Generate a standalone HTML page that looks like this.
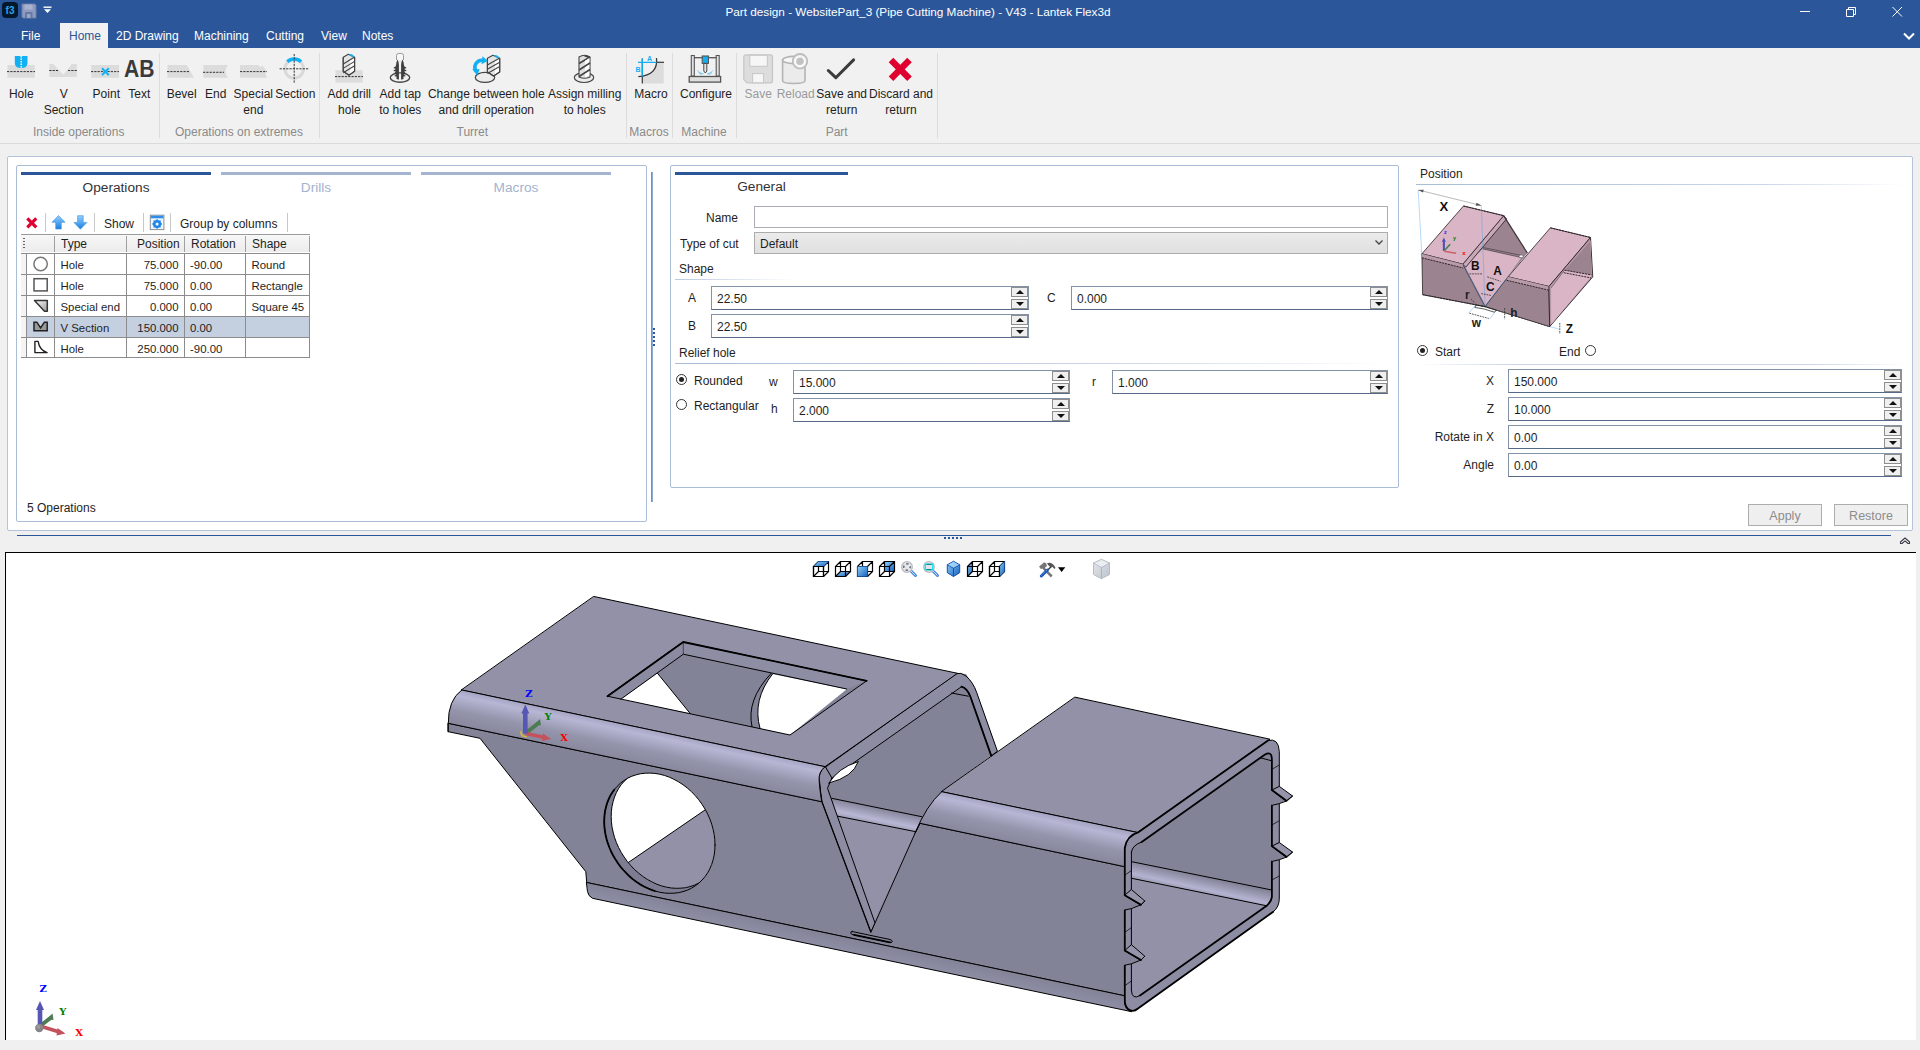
<!DOCTYPE html>
<html lang="en">
<head>
<meta charset="utf-8">
<title>Part design - WebsitePart_3 (Pipe Cutting Machine) - V43 - Lantek Flex3d</title>
<style>
*{box-sizing:border-box;margin:0;padding:0}
html,body{width:1920px;height:1050px;overflow:hidden;background:#f0f0f0;font-family:"Liberation Sans",sans-serif;font-size:12px;color:#1e1e1e}
.abs,.abs *{position:absolute}
#app{position:relative;width:1920px;height:1050px;overflow:hidden}
.t{position:absolute;white-space:nowrap;line-height:16px;height:16px}
.c{text-align:center}
.r{text-align:right}
/* title */
#title{position:absolute;left:0;top:0;width:1920px;height:48px;background:#2b579a}
#title .t{color:#fff}
#hometab{position:absolute;left:60px;top:23px;width:48px;height:25px;background:#f1f1f1}
#ribbon{position:absolute;left:0;top:48px;width:1920px;height:95px;background:#f1f1f1}
#ribline{position:absolute;left:0;top:143px;width:1920px;height:1px;background:#dadbdc}
.rl{position:absolute;white-space:nowrap;line-height:16px;font-size:12px;color:#1e1e1e;text-align:center;transform:translateX(-50%)}
.rg{position:absolute;white-space:nowrap;line-height:16px;font-size:12px;color:#8a8a8a;text-align:center;transform:translateX(-50%);top:76px}
.rsep{position:absolute;top:5px;width:1px;height:85px;background:#dcdcdc}
.dis{color:#9a9a9a}
/* panels */
.panel{position:absolute;background:#fff;border:1px solid #abbcd6;border-radius:2px}
.tabline{position:absolute;height:3px;top:172px}
.inp{position:absolute;background:#fff;border:1px solid #8492a8;border-bottom-color:#566a88;height:24px}
.inp span{position:absolute;left:5px;top:4px;line-height:16px;font-size:12px;white-space:nowrap}
.spin{position:absolute;width:17px;height:10px;border:1px solid #8e8e8e;background:#efefef}
.spin:after{content:"";position:absolute;left:3.5px;top:2px;border-left:4px solid transparent;border-right:4px solid transparent}
.spin.u:after{border-bottom:4px solid #111}
.spin.d:after{border-top:4px solid #111}
.radio{position:absolute;width:11px;height:11px;border:1px solid #333;border-radius:50%;background:#fff}
.radio.on:after{content:"";position:absolute;left:2px;top:2px;width:5px;height:5px;border-radius:50%;background:#222}
.hl{position:absolute;height:1px}
.btn{position:absolute;border:1px solid #adadad;background:#efefef;color:#8c8c8c;font-size:12.5px;text-align:center;line-height:22px;height:22px}
/* grid */
.gh{position:absolute;top:236px;height:16px;background:#f0f0f0;border-right:1px solid #a0a0a0;font-size:12px;line-height:16px;padding-left:6px;white-space:nowrap;overflow:hidden}
.gc{position:absolute;height:21px;border-right:1px solid #8c8c8c;border-bottom:1px solid #8c8c8c;font-size:11.4px;line-height:22px;white-space:nowrap;overflow:hidden;background:#fff}
.gc.sel{background:#c4cfe0}
#vp{position:absolute;left:5px;top:552px;width:1911px;height:488px;background:#fff;border-left:1px solid #000;border-top:1px solid #000}
</style>
</head>
<body>
<div id="app">
<!--TITLE-->
<div id="title">
  <!-- app icon -->
  <svg style="position:absolute;left:2px;top:2px" width="16" height="16" viewBox="0 0 16 16"><rect x="0" y="0" width="16" height="16" rx="4" fill="#04182b"/><text x="8" y="12" font-family="Liberation Sans, sans-serif" font-size="10" font-weight="bold" fill="#2aa3ee" text-anchor="middle">f3</text></svg>
  <!-- save icon (qat) -->
  <svg style="position:absolute;left:21px;top:3px" width="16" height="16" viewBox="0 0 16 16"><path d="M1 1h13l1 1v13H2L1 14z" fill="#8f9cc0" stroke="#6c7ca3" stroke-width="1"/><rect x="3.5" y="1.5" width="8" height="5" fill="#a9b3d1"/><rect x="4" y="9" width="7.5" height="6" fill="#6678a5"/><rect x="6" y="11" width="3.5" height="4" fill="#9aa6c8"/></svg>
  <svg style="position:absolute;left:43px;top:6px" width="9" height="8" viewBox="0 0 9 8"><rect x="0.5" y="0.5" width="8" height="1.4" fill="#fff"/><path d="M1 3.3h7L4.5 7z" fill="#fff"/></svg>
  <div class="t c" style="left:618px;width:600px;top:3.6px;font-size:11.75px">Part design - WebsitePart_3 (Pipe Cutting Machine) - V43 - Lantek Flex3d</div>
  <!-- window controls -->
  <svg style="position:absolute;left:1796px;top:3px" width="120" height="18" viewBox="0 0 120 18"><g stroke="#fff" stroke-width="1" fill="none"><path d="M4 8.5h10"/><path d="M50.5 6.5h7v7h-7z"/><path d="M52.500 6.500v-2h7v7h-2"/><path d="M96.500 4l9.500 9.500M106 4l-9.500 9.500"/></g></svg>
  <svg style="position:absolute;left:1902px;top:31px" width="14" height="10" viewBox="0 0 14 10"><path d="M2 2.500l5 5 5-5" stroke="#fff" stroke-width="2" fill="none"/></svg>
  <div id="hometab"></div>
  <div class="t" style="left:21px;top:28px">File</div>
  <div class="t" style="left:69px;top:28px;color:#2b579a">Home</div>
  <div class="t" style="left:116px;top:28px">2D Drawing</div>
  <div class="t" style="left:194px;top:28px">Machining</div>
  <div class="t" style="left:266px;top:28px">Cutting</div>
  <div class="t" style="left:321px;top:28px">View</div>
  <div class="t" style="left:362px;top:28px">Notes</div>
</div>
<!--RIBBON-->
<div id="ribbon">
<svg style="position:absolute;left:0;top:0" width="960" height="95" viewBox="0 48 960 95">
<!-- Hole -->
<rect x="7.500" y="65" width="27.300" height="12.800" fill="#dcdcdc"/><path d="M7 71.600h28" stroke="#333" stroke-width="1" stroke-dasharray="2.2 1.1"/>
<path d="M14.800 56h12.700v7q0 5-6.350 5q-6.350 0-6.350-5z" fill="#12b0f3"/><path d="M21.200 56v12" stroke="#fff" stroke-width="1.400" stroke-dasharray="1.400 1.100"/>
<!-- V section -->
<path d="M49.300 64h4l10 10.700 8.400-10.700h5.100v13h-27.500z" fill="#dcdcdc"/><path d="M49.300 70.500h9.800M68 70.500h9" stroke="#333" stroke-width="1" stroke-dasharray="2.2 1.1"/>
<!-- Point -->
<rect x="91.250" y="65" width="27.750" height="12.800" fill="#dcdcdc"/><path d="M91 71.600h28" stroke="#333" stroke-width="1" stroke-dasharray="2.2 1.1"/>
<path d="M102 68.300l6.800 6.800M108.800 68.300l-6.800 6.800" stroke="#12b0f3" stroke-width="2"/>
<!-- Text AB -->
<text x="139.200" y="77.200" font-family="Liberation Sans, sans-serif" font-weight="bold" font-size="23.500" fill="#3a3a3c" text-anchor="middle" textLength="30.500" lengthAdjust="spacingAndGlyphs">AB</text>
<!-- Bevel -->
<path d="M167.500 65h19.200l7.300 12.800h-26.500z" fill="#dcdcdc"/><path d="M167 71.600h23" stroke="#333" stroke-width="1" stroke-dasharray="2.2 1.1"/>
<!-- End -->
<path d="M203.300 65h24.700q-5 6.400 0 12.800h-24.700z" fill="#dcdcdc"/><path d="M203 72.300h21" stroke="#333" stroke-width="1" stroke-dasharray="2.2 1.1"/>
<!-- Special end -->
<path d="M240 65h18.500l2 2.300 2-1.800 4.500 6-2 1.500 2.200 4.800h-27.200z" fill="#dcdcdc"/><path d="M240 71.600h27" stroke="#333" stroke-width="1" stroke-dasharray="2.2 1.1"/>
<!-- Section -->
<circle cx="294.200" cy="68.800" r="9.300" fill="none" stroke="#d9d9d9" stroke-width="3"/>
<path d="M287.400 61.700a9.800 9.800 0 0 1 13.600 0" fill="none" stroke="#12b0f3" stroke-width="3.600"/>
<path d="M294.200 54v29.500M279.600 68.800h29.200" stroke="#333" stroke-width="1" stroke-dasharray="2.2 1.1"/>
<!-- Add drill hole -->
<rect x="335.400" y="70.300" width="27.300" height="12.300" fill="#dcdcdc"/><path d="M335 76.600h28" stroke="#333" stroke-width="1" stroke-dasharray="2.2 1.1"/>
<path d="M343.2 57.2 L348.33 54.2 L354.59999999999997 57.2 V71.2 L348.9 75.2 L343.2 71.2Z" fill="#e4e4e4" stroke="#444" stroke-width="1.1" stroke-linejoin="round"/><path d="M350.268 60.2L353.99999999999994 58.7V70.2L350.268 73.7Z" fill="#fff"/><path d="M343.2 64.03333333333333 L354.59999999999997 57.03333333333334" stroke="#444" stroke-width="1.1" fill="none"/><path d="M343.2 68.36666666666667 L354.59999999999997 61.366666666666674" stroke="#444" stroke-width="1.1" fill="none"/><path d="M343.2 72.7 L354.59999999999997 65.7" stroke="#444" stroke-width="1.1" fill="none"/><path d="M343.2 57.2 V71.2 L348.9 75.2 L354.59999999999997 71.2 V57.2" fill="none" stroke="#444" stroke-width="1.1"/><path d="M348.9 54.5 Q352.32 53.0 354.59999999999997 57.0 L351.75 56.800000000000004Z" fill="#12b0f3"/>
<!-- Add tap -->
<ellipse cx="400" cy="77.600" rx="9.700" ry="4.700" fill="#f1f1f1" stroke="#444" stroke-width="1.400"/>
<path d="M396.500 60v-4.500q0-2 2-2h3q2 0 2 2v4.500" fill="#f7f7f7" stroke="#9a9a9a" stroke-width="1"/>
<path d="M397.700 59.500q.8 1.500 1.200 5.500v14.700q-1.600-.2-2.600-.9l.4-2-2.600-.7 2.200-1.600-2.800-1 2.500-1.700-2.800-1 2.600-1.800-2.400-.9 2.500-2 .600-4zM402.300 59.500q-.8 1.500-1.200 5.500v14.700q1.600-.2 2.600-.9l-.4-2 2.600-.7-2.200-1.600 2.800-1-2.500-1.700 2.800-1-2.600-1.800 2.400-.9-2.500-2-.600-4z" fill="#3f3f41"/>
<!-- Change between -->
<ellipse cx="485" cy="77.400" rx="9.700" ry="5" fill="#ececec" stroke="#444" stroke-width="1.200"/>
<path d="M487.4 58.2 L492.935 55.2 L499.7 58.2 V72.0 L493.54999999999995 76.0 L487.4 72.0Z" fill="#e4e4e4" stroke="#444" stroke-width="1.1" stroke-linejoin="round"/><path d="M495.02599999999995 61.2L499.09999999999997 59.7V71.0L495.02599999999995 74.5Z" fill="#fff"/><path d="M487.4 64.96666666666667 L499.7 57.96666666666667" stroke="#444" stroke-width="1.1" fill="none"/><path d="M487.4 69.23333333333333 L499.7 62.233333333333334" stroke="#444" stroke-width="1.1" fill="none"/><path d="M487.4 73.5 L499.7 66.5" stroke="#444" stroke-width="1.1" fill="none"/><path d="M487.4 58.2 V72.0 L493.54999999999995 76.0 L499.7 72.0 V58.2" fill="none" stroke="#444" stroke-width="1.1"/><path d="M493.54999999999995 55.5 Q497.23999999999995 54.0 499.7 58.0 L496.625 57.800000000000004Z" fill="#12b0f3"/>
<path d="M484.500 60.800a7 7 0 0 0-8.300 10.500" fill="none" stroke="#12b0f3" stroke-width="3.600"/>
<path d="M482.600 56.300l5.200 4.700-6.400 3.300z" fill="#12b0f3"/><path d="M472.300 69l7.400 .2-2.600 6.400z" fill="#12b0f3"/>
<!-- Assign milling -->
<ellipse cx="584" cy="77.600" rx="9.700" ry="4.900" fill="#ececec" stroke="#444" stroke-width="1.200"/>
<path d="M579 57q5.500-3.500 11 0v20q-5.500 2.500-11 0z" fill="#e0e0e0" stroke="#444" stroke-width="1.100"/>
<path d="M579 63.500l11-6.500M579 70l11-7M579 76.500l11-7M584.500 55.700l5 1.500" stroke="#444" stroke-width="1.600" fill="none"/>
<path d="M585 60.700l4.400-2.600v4l-4.400 2.700zM585 67.300l4.400-2.700v4l-4.400 2.700zM585 74l4.400-2.800v4l-4.400 2.400z" fill="#fff"/>
<!-- Macro -->
<path d="M656.700 62.300h7v21.200h-21.400v-6.800q14.400-.7 14.400-14.400z" fill="#dcdcdc"/>
<path d="M642.300 58.400v25" stroke="#3a3a3c" stroke-width="1.200"/><path d="M656 62.300h8" stroke="#3a3a3c" stroke-width="1.200"/>
<path d="M656.500 58q2 17-18.200 18.700" fill="none" stroke="#3a3a3c" stroke-width="1.300"/>
<path d="M638 62.300h18.500M642.300 58.400v18" stroke="#12b0f3" stroke-width="1.200"/>
<text x="649.600" y="60.500" font-family="Liberation Sans, sans-serif" font-weight="bold" font-size="7" fill="#12b0f3" text-anchor="middle">A</text>
<text x="638" y="72.200" font-family="Liberation Sans, sans-serif" font-weight="bold" font-size="7" fill="#12b0f3" text-anchor="middle">B</text>
<!-- Configure -->
<path d="M691.300 55.500h3v20.500h-3zM716.200 55.500h3v20.500h-3z" fill="#e2e2e2" stroke="#555" stroke-width="1.100"/>
<path d="M694 57.700h22.500" stroke="#555" stroke-width="1.300"/>
<rect x="689.200" y="76.500" width="31.400" height="5.600" fill="#dedede" stroke="#555" stroke-width="1.300"/>
<rect x="702.200" y="56" width="6.200" height="7.400" fill="#12b0f3" stroke="#555" stroke-width="1.100"/>
<path d="M703.800 63.400h3v7.600l-1.500 2-1.500-2z" fill="#e8e8e8" stroke="#444" stroke-width="1"/>
<path d="M697.500 70.300q2 3.500 6 3.500M698.500 72.500q1.500 1.800 3.500 1.900M713 70.300q-2 3.500-6 3.500M712 72.500q-1.500 1.800-3.500 1.900" stroke="#12b0f3" stroke-width=".7" fill="none" opacity=".8"/>
<!-- Save disabled -->
<path d="M746 54.800h24.500q2 0 2 2v24q0 2-2 2h-23.500l-3.200-3.200v-22.800q0-2 2.200-2z" fill="#dddddd" stroke="#c6c6c6" stroke-width="1.200"/>
<rect x="749.800" y="55.300" width="17.500" height="11" fill="#f6f6f6" stroke="#c6c6c6" stroke-width="1"/>
<rect x="752.600" y="73.600" width="11" height="9.200" fill="#f6f6f6" stroke="#c6c6c6" stroke-width="1"/>
<!-- Reload disabled -->
<path d="M782.600 60v20.500q0 3 11.200 3t11.200-3v-20.500" fill="#ebebeb" stroke="#b4b4b4" stroke-width="1.600"/>
<ellipse cx="793.800" cy="60" rx="11.200" ry="3.600" fill="#f7f7f7" stroke="#b4b4b4" stroke-width="1.600"/>
<circle cx="800" cy="61.300" r="7.300" fill="#f3f3f3" stroke="#bcbcbc" stroke-width="1.800"/>
<circle cx="800" cy="61.300" r="3.800" fill="#c2c2c2"/><circle cx="800" cy="61.300" r="4.600" fill="none" stroke="#fff" stroke-width="1" stroke-dasharray="9 3"/>
<!-- Save and return -->
<path d="M828.300 70.500l7.500 7.200 17.800-17.800" fill="none" stroke="#3b3b3d" stroke-width="3" stroke-linecap="round" stroke-linejoin="round"/>
<!-- Discard -->
<path d="M891 60l18.500 18.700M909.500 60l-18.500 18.700" stroke="#e0002f" stroke-width="6.400"/>
</svg>
<div class="rl" style="left:21.3px;top:38px">Hole</div><div class="rl" style="left:63.7px;top:38px">V</div><div class="rl" style="left:63.7px;top:54px">Section</div><div class="rl" style="left:106.3px;top:38px">Point</div><div class="rl" style="left:139.3px;top:38px">Text</div><div class="rl" style="left:181.7px;top:38px">Bevel</div><div class="rl" style="left:215.7px;top:38px">End</div><div class="rl" style="left:253.3px;top:38px">Special</div><div class="rl" style="left:253.3px;top:54px">end</div><div class="rl" style="left:295.3px;top:38px">Section</div><div class="rl" style="left:349.3px;top:38px">Add drill</div><div class="rl" style="left:349.3px;top:54px">hole</div><div class="rl" style="left:400.3px;top:38px">Add tap</div><div class="rl" style="left:400.3px;top:54px">to holes</div><div class="rl" style="left:486.3px;top:38px">Change between hole</div><div class="rl" style="left:486.3px;top:54px">and drill operation</div><div class="rl" style="left:584.7px;top:38px">Assign milling</div><div class="rl" style="left:584.7px;top:54px">to holes</div><div class="rl" style="left:651px;top:38px">Macro</div><div class="rl" style="left:706px;top:38px">Configure</div><div class="rl dis" style="left:758.3px;top:38px">Save</div><div class="rl dis" style="left:795.7px;top:38px">Reload</div><div class="rl" style="left:841.7px;top:38px">Save and</div><div class="rl" style="left:841.7px;top:54px">return</div><div class="rl" style="left:901px;top:38px">Discard and</div><div class="rl" style="left:901px;top:54px">return</div><div class="rg" style="left:78.7px">Inside operations</div><div class="rg" style="left:239px">Operations on extremes</div><div class="rg" style="left:472.3px">Turret</div><div class="rg" style="left:649px">Macros</div><div class="rg" style="left:704px">Machine</div><div class="rg" style="left:836.7px">Part</div><div class="rsep" style="left:159px"></div><div class="rsep" style="left:319px"></div><div class="rsep" style="left:626px"></div><div class="rsep" style="left:672px"></div><div class="rsep" style="left:736px"></div><div class="rsep" style="left:937px"></div></div>
<div id="ribline"></div>
<!--LEFT-->
<div class="panel" style="left:7px;top:156px;width:1906px;height:375px;border-color:#b4c3da"></div>
<div class="panel" style="left:16px;top:165px;width:631px;height:357px"></div>
<div class="tabline" style="left:21px;width:190px;background:#2b579a"></div>
<div class="tabline" style="left:221px;width:190px;background:#a5b4d0"></div>
<div class="tabline" style="left:421px;width:190px;background:#a5b4d0"></div>
<div class="t c" style="left:21px;width:190px;top:180px;font-size:13.7px;color:#333">Operations</div>
<div class="t c" style="left:221px;width:190px;top:180px;font-size:13.7px;color:#a3b3cf">Drills</div>
<div class="t c" style="left:421px;width:190px;top:180px;font-size:13.7px;color:#a3b3cf">Macros</div>
<!-- toolbar -->
<svg style="position:absolute;left:20px;top:212px" width="275" height="22" viewBox="20 212 275 22">
<defs><linearGradient id="ga" x1="0" y1="0" x2="0" y2="1"><stop offset="0" stop-color="#8fd0ff"/><stop offset="1" stop-color="#1d7fe0"/></linearGradient></defs>
<path d="M27.300 218.300l9 9M36.300 218.300l-9 9" stroke="#e0002f" stroke-width="3.200"/>
<path d="M45.500 213v19M94.500 213v19M143.500 213v19M170.500 213v19M287.500 213v19" stroke="#c9c9c9" stroke-width="1"/>
<path d="M58.500 215.500l6.500 6.800h-3.700v6.700h-5.600v-6.700h-3.700z" fill="url(#ga)" stroke="#3f8fdc" stroke-width=".6"/>
<path d="M80.400 229.200l6.500-6.800h-3.700v-6.700h-5.600v6.700h-3.700z" fill="url(#ga)" stroke="#3f8fdc" stroke-width=".6"/>
<rect x="150.300" y="215.200" width="13.600" height="14.400" fill="#eef6ff" stroke="#8c9096" stroke-width="1"/>
<rect x="150.800" y="215.700" width="12.600" height="2.600" fill="#2f8fe8"/>
<circle cx="157.100" cy="224" r="3" fill="none" stroke="#1e86e6" stroke-width="2.200"/>
<path d="M157.100 219.200v9.600M152.300 224h9.600M153.700 220.600l6.800 6.800M160.500 220.600l-6.800 6.800" stroke="#1e86e6" stroke-width="1.300"/>
<circle cx="157.100" cy="224" r="1.500" fill="#eef6ff"/>
</svg>
<div class="t" style="left:104px;top:216px">Show</div>
<div class="t" style="left:180px;top:216px">Group by columns</div>
<div style="position:absolute;left:21px;top:234px;width:289px;height:1px;background:#9a9a9a"></div><div style="position:absolute;left:21px;top:235px;width:289px;height:17px;background:linear-gradient(#f7f7f7,#ececec)"></div><div style="position:absolute;left:21px;top:252px;width:289px;height:1px;background:#fff"></div><div class="gh" style="left:28px;width:27px;background:none;padding-left:6px"></div><div class="gh" style="left:55px;width:72px;background:none;padding-left:6px">Type</div><div class="gh" style="left:127px;width:58px;background:none;padding-left:10px">Position</div><div class="gh" style="left:185px;width:61px;background:none;padding-left:6px">Rotation</div><div class="gh" style="left:246px;width:64px;background:none;padding-left:6px">Shape</div><div style="position:absolute;left:23px;top:238px;width:2px;height:11px;background:repeating-linear-gradient(#666 0 1px,transparent 1px 3px)"></div><div class="gc" style="left:21px;top:254px;width:6px;height:21px;background:#f4f4f4;border-right:1px solid #8c8c8c"></div><div class="gc" style="left:27px;top:254px;width:28px;height:21px"></div><div class="gc" style="left:55px;top:254px;width:72px;height:21px;padding-left:5.500px">Hole</div><div class="gc" style="left:127px;top:254px;width:58px;height:21px;text-align:right;padding-right:5.500px">75.000</div><div class="gc" style="left:185px;top:254px;width:61px;height:21px;padding-left:5px">-90.00</div><div class="gc" style="left:246px;top:254px;width:64px;height:21px;padding-left:5.500px">Round</div><div class="gc" style="left:21px;top:275px;width:6px;height:21px;background:#f4f4f4;border-right:1px solid #8c8c8c"></div><div class="gc" style="left:27px;top:275px;width:28px;height:21px"></div><div class="gc" style="left:55px;top:275px;width:72px;height:21px;padding-left:5.500px">Hole</div><div class="gc" style="left:127px;top:275px;width:58px;height:21px;text-align:right;padding-right:5.500px">75.000</div><div class="gc" style="left:185px;top:275px;width:61px;height:21px;padding-left:5px">0.00</div><div class="gc" style="left:246px;top:275px;width:64px;height:21px;padding-left:5.500px">Rectangle</div><div class="gc" style="left:21px;top:296px;width:6px;height:21px;background:#f4f4f4;border-right:1px solid #8c8c8c"></div><div class="gc" style="left:27px;top:296px;width:28px;height:21px"></div><div class="gc" style="left:55px;top:296px;width:72px;height:21px;padding-left:5.500px">Special end</div><div class="gc" style="left:127px;top:296px;width:58px;height:21px;text-align:right;padding-right:5.500px">0.000</div><div class="gc" style="left:185px;top:296px;width:61px;height:21px;padding-left:5px">0.00</div><div class="gc" style="left:246px;top:296px;width:64px;height:21px;padding-left:5.500px">Square 45</div><div class="gc" style="left:21px;top:317px;width:6px;height:21px;background:#f4f4f4;border-right:1px solid #8c8c8c"></div><div class="gc sel" style="left:27px;top:317px;width:28px;height:21px"></div><div class="gc sel" style="left:55px;top:317px;width:72px;height:21px;padding-left:5.500px">V Section</div><div class="gc sel" style="left:127px;top:317px;width:58px;height:21px;text-align:right;padding-right:5.500px">150.000</div><div class="gc sel" style="left:185px;top:317px;width:61px;height:21px;padding-left:5px">0.00</div><div class="gc sel" style="left:246px;top:317px;width:64px;height:21px;padding-left:5.500px"></div><div class="gc" style="left:21px;top:338px;width:6px;height:20px;background:#f4f4f4;border-right:1px solid #8c8c8c"></div><div class="gc" style="left:27px;top:338px;width:28px;height:20px"></div><div class="gc" style="left:55px;top:338px;width:72px;height:20px;padding-left:5.500px">Hole</div><div class="gc" style="left:127px;top:338px;width:58px;height:20px;text-align:right;padding-right:5.500px">250.000</div><div class="gc" style="left:185px;top:338px;width:61px;height:20px;padding-left:5px">-90.00</div><div class="gc" style="left:246px;top:338px;width:64px;height:20px;padding-left:5.500px"></div><div style="position:absolute;left:21px;top:253px;width:289px;height:1px;background:#8c8c8c"></div>
<svg style="position:absolute;left:30px;top:254px" width="22" height="104" viewBox="30 254 22 104">
<defs><linearGradient id="gi" x1="0" y1="0" x2="1" y2="1"><stop offset="0" stop-color="#fff"/><stop offset="1" stop-color="#9a9a9a"/></linearGradient></defs>
<circle cx="40.600" cy="264" r="6.700" fill="#fff" stroke="#777" stroke-width="1.500"/>
<rect x="34" y="278.700" width="13.200" height="12.200" fill="#fff" stroke="#555" stroke-width="1.500"/>
<path d="M34.500 300.600h12.800v10.600h-2.800z" fill="url(#gi)" stroke="#333" stroke-width="1.500" stroke-linejoin="round"/>
<path d="M34 322.200h2.800l3.800 5.600 3.800-5.600h2.800v8.600h-13.200z" fill="#9a9a9a" stroke="#222" stroke-width="1.500" stroke-linejoin="miter"/>
<path d="M34.900 341.400h3.200q1.500 9 9 11.200h-12.200z" fill="#fff" stroke="#222" stroke-width="1.400" stroke-linejoin="round"/>
</svg>
<div class="t" style="left:27px;top:500px">5 Operations</div>
<!-- splitter -->
<div style="position:absolute;left:651px;top:172px;width:2px;height:330px;background:linear-gradient(90deg,#5b86c8,#9db6dc)"></div>
<div style="position:absolute;left:653px;top:328px;width:2px;height:19px;background:repeating-linear-gradient(#2b579a 0 2px,transparent 2px 4px)"></div>
<!--GENERAL-->
<div class="panel" style="left:670px;top:165px;width:729px;height:323px"></div>
<div class="tabline" style="left:675px;width:173px;background:#2b579a"></div>
<div class="t c" style="left:675px;width:173px;top:179px;font-size:13.7px;color:#333">General</div>
<div class="t r" style="left:640px;width:98px;top:210px">Name</div>
<div style="position:absolute;left:754px;top:206px;width:634px;height:22px;background:#fff;border:1px solid #abadb3"></div>
<div class="t" style="left:680px;top:236px">Type of cut</div>
<div style="position:absolute;left:754px;top:232px;width:634px;height:22px;background:linear-gradient(#ebebeb,#e0e0e0);border:1px solid #acacac"></div>
<div class="t" style="left:760px;top:236px">Default</div>
<svg style="position:absolute;left:1374px;top:239px" width="10" height="7" viewBox="0 0 10 7"><path d="M1.500 1.500l3.500 3.500 3.500-3.500" stroke="#444" stroke-width="1.300" fill="none"/></svg>
<div class="t" style="left:679px;top:261px">Shape</div>
<div class="hl" style="left:675px;top:279px;width:120px;background:linear-gradient(90deg,#b9c8e0,#fff)"></div>
<div class="t" style="left:688px;top:290px">A</div>
<div class="t" style="left:688px;top:318px">B</div>
<div class="t" style="left:1047px;top:290px">C</div>
<div class="t" style="left:679px;top:345px">Relief hole</div>
<div class="hl" style="left:675px;top:363px;width:714px;background:linear-gradient(90deg,#a9bcd8,#c9d5e8 60%,#fff)"></div>
<div class="radio on" style="left:676px;top:374px"></div>
<div class="t" style="left:694px;top:373px">Rounded</div>
<div class="radio" style="left:676px;top:399px"></div>
<div class="t" style="left:694px;top:398px">Rectangular</div>
<div class="t" style="left:769px;top:374px">w</div>
<div class="t" style="left:771px;top:401px">h</div>
<div class="t" style="left:1092px;top:374px">r</div>
<div class="inp" style="left:711px;top:286px;width:318px"><span>22.50</span></div><div class="spin u" style="left:1011px;top:287px"></div><div class="spin d" style="left:1011px;top:299px"></div><div class="inp" style="left:1071px;top:286px;width:317px"><span>0.000</span></div><div class="spin u" style="left:1370px;top:287px"></div><div class="spin d" style="left:1370px;top:299px"></div><div class="inp" style="left:711px;top:314px;width:318px"><span>22.50</span></div><div class="spin u" style="left:1011px;top:315px"></div><div class="spin d" style="left:1011px;top:327px"></div><div class="inp" style="left:793px;top:370px;width:277px"><span>15.000</span></div><div class="spin u" style="left:1052px;top:371px"></div><div class="spin d" style="left:1052px;top:383px"></div><div class="inp" style="left:1112px;top:370px;width:276px"><span>1.000</span></div><div class="spin u" style="left:1370px;top:371px"></div><div class="spin d" style="left:1370px;top:383px"></div><div class="inp" style="left:793px;top:398px;width:277px"><span>2.000</span></div><div class="spin u" style="left:1052px;top:399px"></div><div class="spin d" style="left:1052px;top:411px"></div><!--POSITION-->
<div class="t" style="left:1420px;top:166px">Position</div>
<div class="hl" style="left:1416px;top:184px;width:490px;background:linear-gradient(90deg,#a9bcd8,#c9d5e8 70%,#fff)"></div>
<!--POSIMG-->
<svg style="position:absolute;left:1410px;top:184px" width="200" height="156" viewBox="0 0 1346 1050">
<g font-family="Liberation Sans, sans-serif" font-weight="bold">
<!-- V interior -->
<polygon points="355,540 630,213 790,465 660,625 505,825" fill="#9b8490"/>
<polygon points="365,545 490,437 750,495 655,628 508,820" fill="#d9b5c5"/>
<path d="M490 437L750 495M480 425L745 480" stroke="#3a3036" stroke-width="4" fill="none"/>
<polygon points="355,540 630,213 650,235 375,560" fill="#c8a8b8" stroke="#2e262a" stroke-width="6" stroke-linejoin="round"/>
<path d="M630 213L790 465" stroke="#3a3036" stroke-width="8" fill="none"/>
<ellipse cx="748" cy="487" rx="14" ry="9" fill="#fff" stroke="#333" stroke-width="3"/>
<!-- left segment -->
<polygon points="80,470 360,148 630,213 355,540" fill="#d9b5c5" stroke="#2e262a" stroke-width="5.500"/>
<polygon points="80,470 355,540 505,825 85,745" fill="#9b8490" stroke="#2e262a" stroke-width="5.500"/>
<polygon points="80,470 355,540 357,565 80,497" fill="#b99aa8"/>
<path d="M80 497L357 565" stroke="#1e181b" stroke-width="6" stroke-dasharray="14 6" fill="none"/>
<path d="M85 745L505 825L940 960" stroke="#1e181b" stroke-width="6" stroke-dasharray="14 6" fill="none"/>
<path d="M360 148L630 213" stroke="#1e181b" stroke-width="6" stroke-dasharray="14 6" fill="none"/>
<!-- right segment -->
<polygon points="945,295 1215,360 935,690 660,625" fill="#d9b5c5" stroke="#2e262a" stroke-width="5.500"/>
<polygon points="505,825 660,625 935,690 940,960" fill="#9b8490" stroke="#2e262a" stroke-width="5.500"/>
<polygon points="660,625 935,690 936,715 650,648" fill="#b99aa8"/>
<path d="M650 648L936 715" stroke="#1e181b" stroke-width="6" stroke-dasharray="14 6" fill="none"/>
<path d="M945 295L1215 360" stroke="#1e181b" stroke-width="6" stroke-dasharray="14 6" fill="none"/>
<!-- right end -->
<polygon points="935,690 1215,360 1230,625 940,960" fill="#b898a8" stroke="#2a2226" stroke-width="6"/>
<polygon points="950,700 1040,580 1215,380 1222,620 950,945" fill="#d9b5c5"/>
<polygon points="1040,580 1215,380 1222,612" fill="#9b8490"/>
<path d="M1040 580L1222 612M1035 597L1218 632" stroke="#1e181b" stroke-width="6" stroke-dasharray="14 6" fill="none"/>
<path d="M950 700L1040 580" stroke="#3a3036" stroke-width="3"/>
<!-- dimension lines -->
<path d="M55 40L80 490M480 145L505 820M360 545L505 820L655 628" stroke="#3d9be8" stroke-width="2.500" fill="none"/>
<path d="M395 870L440 815M535 910L580 850M940 960L1000 975" stroke="#3d9be8" stroke-width="2.500" fill="none"/>
<path d="M55 40L480 145" stroke="#444" stroke-width="2.500"/>
<path d="M55 40l38 -2 -6 20zM480 145l-38 2 6-20z" fill="#555"/>
<path d="M400 605h90M520 625l90 30M480 738l65 12M400 870l130 35M637 835v75M1008 935v75M410 775l30 28" stroke="#333" stroke-width="5.500" stroke-dasharray="12 6" fill="none"/>
<path d="M445 815l65 12 70 22-12 14-70-22-62-10z" fill="none" stroke="#222" stroke-width="5"/>
<text x="228" y="180" font-size="88" text-anchor="middle" fill="#111">X</text>
<text x="440" y="582" font-size="80" text-anchor="middle" fill="#111">B</text>
<text x="590" y="615" font-size="80" text-anchor="middle" fill="#111">A</text>
<text x="540" y="718" font-size="80" text-anchor="middle" fill="#111">C</text>
<text x="385" y="775" font-size="80" text-anchor="middle" fill="#222">r</text>
<text x="447" y="965" font-size="80" text-anchor="middle" fill="#222">w</text>
<text x="700" y="893" font-size="80" text-anchor="middle" fill="#222">h</text>
<text x="1072" y="1003" font-size="80" text-anchor="middle" fill="#111">Z</text>
<!-- triad -->
<path d="M228 450V375" stroke="#5050b8" stroke-width="14"/><path d="M228 360l13 28h-26z" fill="#5050b8"/>
<path d="M232 448l38-42" stroke="#4c8050" stroke-width="11"/>
<path d="M230 452l80 14" stroke="#cc6068" stroke-width="10"/>
<text x="238" y="338" font-size="36" fill="#2020ff" text-anchor="middle">z</text>
<text x="300" y="375" font-size="36" fill="#008000" text-anchor="middle">y</text>
<text x="362" y="478" font-size="40" fill="#ff0000" text-anchor="middle">x</text>
</g>
</svg>
<!--/POSIMG-->
<div class="radio on" style="left:1417px;top:345px"></div>
<div class="t" style="left:1435px;top:344px">Start</div>
<div class="t" style="left:1559px;top:344px">End</div>
<div class="radio" style="left:1585px;top:345px"></div>
<div class="hl" style="left:1416px;top:364px;width:490px;background:linear-gradient(90deg,#fff,#c9d5e8 20%,#c9d5e8 80%,#fff)"></div>
<div class="t r" style="left:1400px;width:94px;top:373px">X</div>
<div class="t r" style="left:1400px;width:94px;top:401px">Z</div>
<div class="t r" style="left:1400px;width:94px;top:429px">Rotate in X</div>
<div class="t r" style="left:1400px;width:94px;top:457px">Angle</div>
<div class="btn" style="left:1748px;top:504px;width:74px">Apply</div>
<div class="btn" style="left:1834px;top:504px;width:74px">Restore</div>
<div style="position:absolute;left:17px;top:535px;width:1874px;height:1px;background:#2b579a"></div>
<div style="position:absolute;left:944px;top:537px;width:19px;height:2px;background:repeating-linear-gradient(90deg,#2b579a 0 2px,transparent 2px 4px)"></div>
<svg style="position:absolute;left:1899px;top:536px" width="12" height="10" viewBox="0 0 12 10"><path d="M1.500 7.500v-1.500l4.500-4 4.500 4v1.500h-1.500l-3-2.700-3 2.700z" fill="#fff" stroke="#3a3a48" stroke-width="1.100" stroke-linejoin="round"/></svg>
<div class="inp" style="left:1508px;top:369px;width:394px"><span>150.000</span></div><div class="spin u" style="left:1884px;top:370px"></div><div class="spin d" style="left:1884px;top:382px"></div><div class="inp" style="left:1508px;top:397px;width:394px"><span>10.000</span></div><div class="spin u" style="left:1884px;top:398px"></div><div class="spin d" style="left:1884px;top:410px"></div><div class="inp" style="left:1508px;top:425px;width:394px"><span>0.00</span></div><div class="spin u" style="left:1884px;top:426px"></div><div class="spin d" style="left:1884px;top:438px"></div><div class="inp" style="left:1508px;top:453px;width:394px"><span>0.00</span></div><div class="spin u" style="left:1884px;top:454px"></div><div class="spin d" style="left:1884px;top:466px"></div><!--VIEWPORT-->
<div id="vp"></div>
<svg style="position:absolute;left:0;top:552px" width="1920" height="490" viewBox="0 552 1920 490">
<defs><linearGradient id="gcb" x1="0" y1="0" x2="1" y2="1"><stop offset="0" stop-color="#8fd0f5"/><stop offset="1" stop-color="#1560c0"/></linearGradient>
<linearGradient id="gcg" x1="0" y1="0" x2="1" y2="1"><stop offset="0" stop-color="#e4e9ec"/><stop offset="1" stop-color="#b8bec9"/></linearGradient></defs>
<g transform="translate(813 561)"><path d="M0.500 5.500h10v10h-10zM5.500 0.500h10v10h-10zM0.500 5.500l5-5M10.500 5.500l5-5M0.500 15.500l5-5M10.500 15.500l5-5" fill="none" stroke="#000" stroke-width="1.200"/><polygon points="0.5,5.5 5.5,0.5 15.5,0.5 10.5,5.5" fill="url(#gcb)" stroke="#1457b8" stroke-width=".6"/><path d="M0.500 5.500h10v10h-10z" fill="none" stroke="#000" stroke-width="1.200"/></g><g transform="translate(835 561)"><polygon points="0.5,15.5 5.5,10.5 15.5,10.5 10.5,15.5" fill="url(#gcb)" stroke="#1457b8" stroke-width=".6"/><path d="M0.500 5.500h10v10h-10zM5.500 0.500h10v10h-10zM0.500 5.500l5-5M10.500 5.500l5-5M0.500 15.500l5-5M10.500 15.500l5-5" fill="none" stroke="#000" stroke-width="1.200"/></g><g transform="translate(857 561)"><path d="M0.500 5.500h10v10h-10zM5.500 0.500h10v10h-10zM0.500 5.500l5-5M10.500 5.500l5-5M0.500 15.500l5-5M10.500 15.500l5-5" fill="none" stroke="#000" stroke-width="1.200"/><polygon points="0.5,5.5 10.5,5.5 10.5,15.5 0.5,15.5" fill="url(#gcb)" stroke="#1457b8" stroke-width=".6"/></g><g transform="translate(879 561)"><polygon points="5.5,0.5 15.5,0.5 15.5,10.5 5.5,10.5" fill="url(#gcb)" stroke="#1457b8" stroke-width=".6"/><path d="M0.500 5.500h10v10h-10zM5.500 0.500h10v10h-10zM0.500 5.500l5-5M10.500 5.500l5-5M0.500 15.500l5-5M10.500 15.500l5-5" fill="none" stroke="#000" stroke-width="1.200"/></g>
<g transform="translate(901 561)"><path d="M9.500 9.500l5 5" stroke="#4c86d8" stroke-width="3" stroke-linecap="round"/><path d="M10 10l4.500 4.500" stroke="#bfe0ff" stroke-width="1"/><circle cx="6" cy="6" r="5.300" fill="#e9e9ee" stroke="#b9b9c2" stroke-width="1.300"/><circle cx="6" cy="6" r="3.200" fill="none" stroke="#555" stroke-width="1.300" stroke-dasharray="2.500 2.500" stroke-dashoffset="1.200"/><rect x="4.300" y="4.300" width="3.400" height="3.400" fill="#dfe8f5"/></g><g transform="translate(923 561)"><path d="M9.500 9.500l5 5" stroke="#4c86d8" stroke-width="3" stroke-linecap="round"/><path d="M10 10l4.500 4.500" stroke="#bfe0ff" stroke-width="1"/><circle cx="6" cy="6" r="5.300" fill="#e9e9ee" stroke="#b9b9c2" stroke-width="1.300"/><rect x="2.300" y="3.300" width="7.500" height="5.400" fill="#e4e4ea" stroke="#00e5ee" stroke-width="1.300"/><path d="M3.500 3.300h5M3.500 8.700h5" stroke="#0a8a96" stroke-width="1.300"/></g>
<g transform="translate(947 561)"><path d="M6.500 0.300l6.200 3.400v8l-6.200 3.800-6.200-3.800v-8z" fill="url(#gcb)" stroke="#1550b0" stroke-width="1"/><path d="M0.300 3.700l6.200 3.500 6.200-3.500M6.500 7.200v8.300" fill="none" stroke="#1550b0" stroke-width="1"/><path d="M6.500 0.800l5.600 3-5.600 3-5.600-3z" fill="#a8daf8" opacity=".8"/></g>
<g transform="translate(967 561)"><polygon points="0.5,5.5 5.5,0.5 5.5,10.5 0.5,15.5" fill="url(#gcb)" stroke="#1457b8" stroke-width=".6"/><path d="M0.500 5.500h10v10h-10zM5.500 0.500h10v10h-10zM0.500 5.500l5-5M10.500 5.500l5-5M0.500 15.500l5-5M10.500 15.500l5-5" fill="none" stroke="#000" stroke-width="1.200"/></g><g transform="translate(989 561)"><path d="M0.500 5.500h10v10h-10zM5.500 0.500h10v10h-10zM0.500 5.500l5-5M10.500 5.500l5-5M0.500 15.500l5-5M10.500 15.500l5-5" fill="none" stroke="#000" stroke-width="1.200"/><polygon points="10.5,5.5 15.5,0.5 15.5,10.5 10.5,15.5" fill="url(#gcb)" stroke="#1457b8" stroke-width=".6"/><path d="M0.500 5.500h10v10h-10z" fill="none" stroke="#000" stroke-width="1.200"/></g>
<g transform="translate(1040 562)"><path d="M2 2.500l2-1.800 2 .8.500 2.500-1.500 1.500-1.200-.3 8.500 8.300-1.600 1.500-8.300-8.700-1.700.2-1.200-2z" fill="#777" stroke="#555" stroke-width=".5"/><path d="M7 1.200q5-2 8.500 4.500l-1 1.200-2.200-2.200-1.200 1-2.800-2.500z" fill="#555"/><path d="M10.800 5l-4 4" stroke="#333" stroke-width="1.300"/><path d="M7.300 8.200l-6 5.800" stroke="#1a56b8" stroke-width="3" stroke-linecap="round"/><path d="M6.800 8l-5.500 5.300" stroke="#9cc4f0" stroke-width=".8" stroke-dasharray="1.200 1"/></g>
<path d="M1058 567.300h7.300l-3.650 4.700z" fill="#000"/>
<g transform="translate(1093 559)" opacity=".95"><path d="M8.500 0.300l8 3.700v11.500l-8 4.200-8-4.200v-11.500z" fill="url(#gcg)" stroke="#b4bac4" stroke-width="1"/><path d="M0.500 4l8 4.300 8-4.300M8.500 8.300v11.200" fill="none" stroke="#b0a8c8" stroke-width="1"/><path d="M8.500 1l7 3.200-7 3.700-7-3.700z" fill="#e9eef0"/></g>

<defs>
<linearGradient id="gf1" gradientUnits="userSpaceOnUse" x1="640" y1="727.5" x2="632" y2="765.5"><stop offset="0" stop-color="#a4a4c2"/><stop offset=".16" stop-color="#b7b7d5"/><stop offset=".55" stop-color="#9494ac"/><stop offset="1" stop-color="#848499"/></linearGradient>
<linearGradient id="gf2" gradientUnits="userSpaceOnUse" x1="1040" y1="812.5" x2="1032" y2="850"><stop offset="0" stop-color="#a4a4c2"/><stop offset=".16" stop-color="#b7b7d5"/><stop offset=".55" stop-color="#9494ac"/><stop offset="1" stop-color="#848499"/></linearGradient>
<linearGradient id="gb" gradientUnits="userSpaceOnUse" x1="860" y1="940" x2="856.500" y2="956.500"><stop offset="0" stop-color="#838398"/><stop offset="1" stop-color="#8f8fa6"/></linearGradient>
<linearGradient id="gi1" gradientUnits="userSpaceOnUse" x1="1200" y1="876" x2="1196.500" y2="892"><stop offset="0" stop-color="#838398"/><stop offset=".75" stop-color="#b4b4d2"/><stop offset="1" stop-color="#9a9ab2"/></linearGradient>
<linearGradient id="gi2" gradientUnits="userSpaceOnUse" x1="876" y1="807" x2="872.500" y2="824"><stop offset="0" stop-color="#838398"/><stop offset=".7" stop-color="#b8b8d6"/><stop offset="1" stop-color="#9a9ab2"/></linearGradient>
<clipPath id="chole"><polygon points="683.3,654.2 846.7,689 790,735 620.8,699.2 657.5,673.3"/></clipPath>
</defs>
<polygon points="825.0,766.7 957.5,673.3 966.0,674.0 975.0,688.0 997.4,751.2 941.7,791.7 915.0,833.3 870.8,932.5 819.2,781.7" fill="#838398"/>
<polygon points="831.7,798.3 921.7,816.7 915.8,831.7 835.8,815.8" fill="url(#gi2)"/>
<polygon points="835.8,815.8 915.8,831.7 872.0,927.0" fill="#9291a7"/>
<path d="M831.7 798.3L921.7 816.7M835.8 815.8L915.8 831.7" stroke="#000" stroke-width="1" stroke-linejoin="round" stroke-linecap="round" fill="none"/>
<path d="M825 766.700L955.700 673.600Q961 672 966 676Q973 682 976.700 692.500L997.400 751.200L991.300 755.900L970.400 696.700Q967 688 961.500 686.700L831.700 778.300Z" fill="#8c8ca3" stroke="#000" stroke-width="1" stroke-linejoin="round" stroke-linecap="round"/>
<path d="M961.500 686.700Q967 688 970.400 696.700L991.300 755.900" fill="none" stroke="#000" stroke-width="1.8" stroke-linejoin="round" stroke-linecap="round"/>
<path d="M951.500 693L968.300 696.200" fill="none" stroke="#000" stroke-width="1" stroke-linejoin="round" stroke-linecap="round"/>
<path d="M825 766.700L955.700 673.600" fill="none" stroke="#000" stroke-width="1.8" stroke-linejoin="round" stroke-linecap="round"/>
<path d="M825 766.700Q818 772 819.200 781.700Q820 792 821.700 801.700L863.300 915L870.800 932.500L875 923L827.500 788.300L831.700 778.300Z" fill="#8c8ca3" stroke="#000" stroke-width="1" stroke-linejoin="round" stroke-linecap="round"/>
<path d="M819.200 781.700Q820 792 821.700 801.700L870.800 932.500" fill="none" stroke="#000" stroke-width="1.8" stroke-linejoin="round" stroke-linecap="round"/>
<path d="M829 783Q838 768 858.300 761.500Q853 777 829 783Z" fill="#fff" stroke="#000" stroke-width="1" stroke-linejoin="round" stroke-linecap="round"/>
<polygon points="594.0,596.5 957.5,673.3 825.0,766.7 461.7,690.0" fill="#9291a7" stroke="#000" stroke-width="1" stroke-linejoin="round" stroke-linecap="round"/>
<polygon points="683.3,642.0 866.7,680.8 790.0,735.0 607.5,696.2" fill="#838398"/>
<polygon points="683.3,642.0 607.5,696.2 620.8,699.2 683.3,654.2" fill="#8a8aa0"/>
<polygon points="683.3,642.0 866.7,680.8 846.7,689.0 683.3,654.2" fill="#8d8da4"/>
<polygon points="620.8,699.2 657.5,673.3 690.0,713.3" fill="#fff"/>
<path d="M772.500 674L846.700 689.200L790 735L760 728.300Q752 700 772.500 674Z" fill="#fff"/>
<path d="M771 673.500Q746 700 752 726.700M772.500 674Q752 700 760 728.300" fill="none" stroke="#000" stroke-width="1" stroke-linejoin="round" stroke-linecap="round"/>
<path d="M657.500 673.300L690 713.300" fill="none" stroke="#000" stroke-width="1" stroke-linejoin="round" stroke-linecap="round"/>
<path d="M620.800 699.200L683.300 654.200L846.700 689" fill="none" stroke="#000" stroke-width="1" stroke-linejoin="round" stroke-linecap="round"/>
<path d="M683.300 642V654.200" fill="none" stroke="#000" stroke-width=".5"/>
<polygon points="683.3,642.0 866.7,680.8 790.0,735.0 607.5,696.2" fill="none" stroke="#000" stroke-width="1" stroke-linejoin="round" stroke-linecap="round"/>
<path d="M607.500 696.200L683.300 642L866.700 680.800" fill="none" stroke="#000" stroke-width="1.8" stroke-linejoin="round" stroke-linecap="round"/>
<polygon points="448.3,723.3 821.7,801.7 870.8,932.5 915.0,833.3 920.0,823.3 1124.7,866.7 1124.7,995.8 586.7,882.5 585.8,871.7 480.0,738.3 448.3,731.7" fill="#838398" stroke="#000" stroke-width="1" stroke-linejoin="round" stroke-linecap="round"/>
<clipPath id="cround"><polygon points="715.0,845.0 714.8,850.0 714.2,855.0 713.1,859.8 711.7,864.4 709.8,868.8 707.6,872.9 705.0,876.7 702.0,880.1 698.8,883.2 695.2,885.9 691.4,888.3 687.3,890.2 683.0,891.6 678.5,892.7 673.9,893.2 669.2,893.3 664.4,893.0 659.6,892.2 654.8,891.0 650.0,889.3 645.3,887.1 640.7,884.6 636.2,881.7 631.9,878.4 627.8,874.8 624.0,870.8 620.4,866.6 617.2,862.1 614.2,857.4 611.6,852.5 609.4,847.5 607.5,842.3 606.1,837.1 605.0,831.9 604.4,826.6 604.2,821.5 604.4,816.4 605.0,811.4 606.1,806.6 607.5,802.0 609.4,797.6 611.6,793.5 614.2,789.7 617.2,786.3 620.4,783.2 624.0,780.5 627.8,778.1 631.9,776.2 636.2,774.8 640.7,773.7 645.3,773.2 650.0,773.1 654.8,773.4 659.6,774.2 664.4,775.4 669.2,777.1 673.9,779.3 678.5,781.8 683.0,784.7 687.3,788.0 691.4,791.6 695.2,795.6 698.8,799.8 702.0,804.3 705.0,809.0 707.6,813.9 709.8,818.9 711.7,824.1 713.1,829.3 714.2,834.5 714.8,839.8 715.0,845.0"/></clipPath>
<polygon points="715.0,845.0 714.8,850.0 714.2,855.0 713.1,859.8 711.7,864.4 709.8,868.8 707.6,872.9 705.0,876.7 702.0,880.1 698.8,883.2 695.2,885.9 691.4,888.3 687.3,890.2 683.0,891.6 678.5,892.7 673.9,893.2 669.2,893.3 664.4,893.0 659.6,892.2 654.8,891.0 650.0,889.3 645.3,887.1 640.7,884.6 636.2,881.7 631.9,878.4 627.8,874.8 624.0,870.8 620.4,866.6 617.2,862.1 614.2,857.4 611.6,852.5 609.4,847.5 607.5,842.3 606.1,837.1 605.0,831.9 604.4,826.6 604.2,821.5 604.4,816.4 605.0,811.4 606.1,806.6 607.5,802.0 609.4,797.6 611.6,793.5 614.2,789.7 617.2,786.3 620.4,783.2 624.0,780.5 627.8,778.1 631.9,776.2 636.2,774.8 640.7,773.7 645.3,773.2 650.0,773.1 654.8,773.4 659.6,774.2 664.4,775.4 669.2,777.1 673.9,779.3 678.5,781.8 683.0,784.7 687.3,788.0 691.4,791.6 695.2,795.6 698.8,799.8 702.0,804.3 705.0,809.0 707.6,813.9 709.8,818.9 711.7,824.1 713.1,829.3 714.2,834.5 714.8,839.8 715.0,845.0" fill="#7c7c92"/>
<g clip-path="url(#cround)"><polygon points="722.0,840.0 721.8,845.0 721.2,850.0 720.1,854.8 718.7,859.4 716.8,863.8 714.6,867.9 712.0,871.7 709.0,875.1 705.8,878.2 702.2,880.9 698.4,883.3 694.3,885.2 690.0,886.6 685.5,887.7 680.9,888.2 676.2,888.3 671.4,888.0 666.6,887.2 661.8,886.0 657.0,884.3 652.3,882.1 647.7,879.6 643.2,876.7 638.9,873.4 634.8,869.8 631.0,865.8 627.4,861.6 624.2,857.1 621.2,852.4 618.6,847.5 616.4,842.5 614.5,837.3 613.1,832.1 612.0,826.9 611.4,821.6 611.2,816.5 611.4,811.4 612.0,806.4 613.1,801.6 614.5,797.0 616.4,792.6 618.6,788.5 621.2,784.7 624.2,781.3 627.4,778.2 631.0,775.5 634.8,773.1 638.9,771.2 643.2,769.8 647.7,768.7 652.3,768.2 657.0,768.1 661.8,768.4 666.6,769.2 671.4,770.4 676.2,772.1 680.9,774.3 685.5,776.8 690.0,779.7 694.3,783.0 698.4,786.6 702.2,790.6 705.8,794.8 709.0,799.3 712.0,804.0 714.6,808.9 716.8,813.9 718.7,819.1 720.1,824.3 721.2,829.5 721.8,834.8 722.0,840.0" fill="#fff"/>
<clipPath id="cinner"><polygon points="722.0,840.0 721.8,845.0 721.2,850.0 720.1,854.8 718.7,859.4 716.8,863.8 714.6,867.9 712.0,871.7 709.0,875.1 705.8,878.2 702.2,880.9 698.4,883.3 694.3,885.2 690.0,886.6 685.5,887.7 680.9,888.2 676.2,888.3 671.4,888.0 666.6,887.2 661.8,886.0 657.0,884.3 652.3,882.1 647.7,879.6 643.2,876.7 638.9,873.4 634.8,869.8 631.0,865.8 627.4,861.6 624.2,857.1 621.2,852.4 618.6,847.5 616.4,842.5 614.5,837.3 613.1,832.1 612.0,826.9 611.4,821.6 611.2,816.5 611.4,811.4 612.0,806.4 613.1,801.6 614.5,797.0 616.4,792.6 618.6,788.5 621.2,784.7 624.2,781.3 627.4,778.2 631.0,775.5 634.8,773.1 638.9,771.2 643.2,769.8 647.7,768.7 652.3,768.2 657.0,768.1 661.8,768.4 666.6,769.2 671.4,770.4 676.2,772.1 680.9,774.3 685.5,776.8 690.0,779.7 694.3,783.0 698.4,786.6 702.2,790.6 705.8,794.8 709.0,799.3 712.0,804.0 714.6,808.9 716.8,813.9 718.7,819.1 720.1,824.3 721.2,829.5 721.8,834.8 722.0,840.0"/></clipPath>
<g clip-path="url(#cinner)"><polygon points="628.3,862.5 705.0,810.0 760.0,800.0 760.0,930.0 640.0,930.0" fill="#9291a7"/><path d="M628.300 862.500L705 810" stroke="#000" stroke-width="1" stroke-linejoin="round" stroke-linecap="round" fill="none"/></g>
<polygon points="722.0,840.0 721.8,845.0 721.2,850.0 720.1,854.8 718.7,859.4 716.8,863.8 714.6,867.9 712.0,871.7 709.0,875.1 705.8,878.2 702.2,880.9 698.4,883.3 694.3,885.2 690.0,886.6 685.5,887.7 680.9,888.2 676.2,888.3 671.4,888.0 666.6,887.2 661.8,886.0 657.0,884.3 652.3,882.1 647.7,879.6 643.2,876.7 638.9,873.4 634.8,869.8 631.0,865.8 627.4,861.6 624.2,857.1 621.2,852.4 618.6,847.5 616.4,842.5 614.5,837.3 613.1,832.1 612.0,826.9 611.4,821.6 611.2,816.5 611.4,811.4 612.0,806.4 613.1,801.6 614.5,797.0 616.4,792.6 618.6,788.5 621.2,784.7 624.2,781.3 627.4,778.2 631.0,775.5 634.8,773.1 638.9,771.2 643.2,769.8 647.7,768.7 652.3,768.2 657.0,768.1 661.8,768.4 666.6,769.2 671.4,770.4 676.2,772.1 680.9,774.3 685.5,776.8 690.0,779.7 694.3,783.0 698.4,786.6 702.2,790.6 705.8,794.8 709.0,799.3 712.0,804.0 714.6,808.9 716.8,813.9 718.7,819.1 720.1,824.3 721.2,829.5 721.8,834.8 722.0,840.0" fill="none" stroke="#000" stroke-width="1" stroke-linejoin="round" stroke-linecap="round"/></g>
<polygon points="715.0,845.0 714.8,850.0 714.2,855.0 713.1,859.8 711.7,864.4 709.8,868.8 707.6,872.9 705.0,876.7 702.0,880.1 698.8,883.2 695.2,885.9 691.4,888.3 687.3,890.2 683.0,891.6 678.5,892.7 673.9,893.2 669.2,893.3 664.4,893.0 659.6,892.2 654.8,891.0 650.0,889.3 645.3,887.1 640.7,884.6 636.2,881.7 631.9,878.4 627.8,874.8 624.0,870.8 620.4,866.6 617.2,862.1 614.2,857.4 611.6,852.5 609.4,847.5 607.5,842.3 606.1,837.1 605.0,831.9 604.4,826.6 604.2,821.5 604.4,816.4 605.0,811.4 606.1,806.6 607.5,802.0 609.4,797.6 611.6,793.5 614.2,789.7 617.2,786.3 620.4,783.2 624.0,780.5 627.8,778.1 631.9,776.2 636.2,774.8 640.7,773.7 645.3,773.2 650.0,773.1 654.8,773.4 659.6,774.2 664.4,775.4 669.2,777.1 673.9,779.3 678.5,781.8 683.0,784.7 687.3,788.0 691.4,791.6 695.2,795.6 698.8,799.8 702.0,804.3 705.0,809.0 707.6,813.9 709.8,818.9 711.7,824.1 713.1,829.3 714.2,834.5 714.8,839.8 715.0,845.0" fill="none" stroke="#000" stroke-width="1" stroke-linejoin="round" stroke-linecap="round"/>
<polyline points="654.8,891.0 650.9,889.6 647.1,888.0 643.4,886.2 639.7,884.1 636.2,881.7 632.7,879.1 629.4,876.3 626.3,873.2 623.3,870.0 620.4,866.6 617.8,863.0 615.4,859.3 613.1,855.5 611.1,851.5 609.4,847.5 607.9,843.4 606.6,839.2 605.6,835.0 604.9,830.8 604.4,826.6 604.2,822.5 604.3,818.4 604.6,814.3 605.2,810.4 606.1,806.6 607.2,802.9 608.6,799.3 610.2,795.9 612.1,792.7 614.2,789.7" fill="none" stroke="#000" stroke-width="1.8" stroke-linejoin="round" stroke-linecap="round"/>
<path d="M852 931.500L890 939.500Q894 941 891 942.700L853 934.700Q848.500 933 852 931.500Z" fill="#838398" stroke="#000" stroke-width="1" stroke-linejoin="round" stroke-linecap="round"/>
<path d="M854 934.800L890 942.400" fill="none" stroke="#000" stroke-width="1.8" stroke-linejoin="round" stroke-linecap="round"/>
<path d="M461.700 690L825 766.700Q818 772 819.200 781.700Q820 792 821.700 801.700L448.300 723.300Q448 700 461.700 690Z" fill="url(#gf1)" stroke="#000" stroke-width="1" stroke-linejoin="round" stroke-linecap="round"/>
<path d="M448.300 723.300V731.700" stroke="#000" stroke-width="1" stroke-linejoin="round" stroke-linecap="round" fill="none"/>
<path d="M586.700 882.500L1124.700 995.800V1003Q1125.500 1010 1131.700 1011.700L592.500 898.300Q588 896 587.500 891.700Z" fill="url(#gb)" stroke="#000" stroke-width="1" stroke-linejoin="round" stroke-linecap="round"/>
<polygon points="1075.2,697.2 1270.0,739.2 1137.5,832.5 941.7,791.7" fill="#9291a7" stroke="#000" stroke-width="1" stroke-linejoin="round" stroke-linecap="round"/>
<path d="M941.700 791.700L1137.500 832.500Q1127 838 1125.500 848L1124.700 866.700L920 823.300Q915 833 915 833.300Q926 806 941.700 791.700Z" fill="url(#gf2)" stroke="#000" stroke-width="1" stroke-linejoin="round" stroke-linecap="round"/>
<polygon points="1127.0,846.0 1138.0,837.0 1268.3,748.0 1275.0,757.0 1275.0,897.0 1266.7,908.0 1135.8,1002.0 1127.0,993.0" fill="#838398"/>
<polygon points="1131.7,861.7 1271.7,890.0 1271.7,897.0 1266.7,905.8 1131.7,878.3" fill="url(#gi1)"/>
<polygon points="1131.7,878.3 1266.7,905.8 1135.8,998.3 1131.7,993.0" fill="#9291a7"/>
<path d="M1131.700 861.700L1271.700 890M1131.700 878.300L1266.700 905.800" stroke="#000" stroke-width="1" stroke-linejoin="round" stroke-linecap="round" fill="none"/>
<path d="M1138 832.400L1268 740.500Q1278.500 737.500 1279.300 751.400V898Q1279.500 907 1273.300 911.700L1138 1008.500Q1133 1013 1128 1009Q1124.800 1006 1124.800 1000V848Q1126.500 836 1138 832.400ZM1141.700 842L1265 754.500Q1271.900 750.500 1271.900 760V897Q1271 902 1266.700 905.800L1140 995.500Q1132 1000.500 1131.400 990V852Q1132.500 845 1141.700 842Z" fill="#8c8ca3" fill-rule="evenodd"/>
<path d="M1268 740.500Q1278.500 737.500 1279.300 751.400V786.400M1279.300 803.600V842.500M1279.300 859.700V898Q1279.500 907 1273.300 911.700M1131.400 852V889.500M1131.400 908.600V944.700M1131.400 963.800V990Q1132 1000.500 1140 995.500M1131.400 852Q1132.500 845 1141.700 842" fill="none" stroke="#000" stroke-width="1" stroke-linejoin="round" stroke-linecap="round"/>
<path d="M1138 832.400L1268 740.500M1138 832.400Q1126.500 836 1124.800 848V895.200M1124.800 910V950.400M1124.800 965.200V1000Q1124.800 1006 1128 1009Q1133 1013 1138 1008.500L1273.300 911.700" fill="none" stroke="#000" stroke-width="1.8" stroke-linejoin="round" stroke-linecap="round"/>
<path d="M1141.700 842L1265 754.500Q1271.900 750.500 1271.900 760V790M1271.900 805.400V846.100M1271.900 861.500V897Q1271 902 1266.700 905.800L1140 995.500" fill="none" stroke="#000" stroke-width="1.8" stroke-linejoin="round" stroke-linecap="round"/>
<path d="M1260.700 757.900L1271.400 760.700" fill="none" stroke="#000" stroke-width="1" stroke-linejoin="round" stroke-linecap="round"/>
<polygon points="1271.9,790.0 1279.8,786.4 1279.8,803.6 1271.9,805.4" fill="#838398"/>
<polygon points="1271.9,790.0 1286.4,800.7 1279.3,803.6 1271.9,805.4" fill="#838398"/>
<polygon points="1271.9,790.0 1279.3,786.4 1292.6,796.0 1286.4,800.7" fill="#9594ab" stroke="#000" stroke-width="1" stroke-linejoin="round" stroke-linecap="round"/>
<path d="M1292.600 796.0L1287.400 800.6999999999999L1279.300 803.6L1271.900 805.4" fill="none" stroke="#000" stroke-width="1" stroke-linejoin="round" stroke-linecap="round"/>
<path d="M1271.900 790.0L1286.400 800.6999999999999" fill="none" stroke="#000" stroke-width="1.8" stroke-linejoin="round" stroke-linecap="round"/>
<polygon points="1271.9,846.1 1279.8,842.5 1279.8,859.7 1271.9,861.5" fill="#838398"/>
<polygon points="1271.9,846.1 1286.4,856.8 1279.3,859.7 1271.9,861.5" fill="#838398"/>
<polygon points="1271.9,846.1 1279.3,842.5 1292.6,852.1 1286.4,856.8" fill="#9594ab" stroke="#000" stroke-width="1" stroke-linejoin="round" stroke-linecap="round"/>
<path d="M1292.600 852.1L1287.400 856.8L1279.300 859.7L1271.900 861.5" fill="none" stroke="#000" stroke-width="1" stroke-linejoin="round" stroke-linecap="round"/>
<path d="M1271.900 846.1L1286.400 856.8" fill="none" stroke="#000" stroke-width="1.8" stroke-linejoin="round" stroke-linecap="round"/>
<polygon points="1123.5,895.2 1141.0,904.8 1131.4,908.6 1123.5,910.0" fill="#838398"/>
<polygon points="1124.8,895.2 1131.4,889.5 1144.8,901.0 1141.0,904.8" fill="#9594ab" stroke="#000" stroke-width="1" stroke-linejoin="round" stroke-linecap="round"/>
<path d="M1144.800 901.0L1141 904.8000000000001L1131.400 908.6L1124.800 910.0" fill="none" stroke="#000" stroke-width="1" stroke-linejoin="round" stroke-linecap="round"/>
<path d="M1124.800 895.2L1141 904.8000000000001" fill="none" stroke="#000" stroke-width="1.8" stroke-linejoin="round" stroke-linecap="round"/>
<polygon points="1123.5,950.4 1141.0,960.0 1131.4,963.8 1123.5,965.2" fill="#838398"/>
<polygon points="1124.8,950.4 1131.4,944.7 1144.8,956.2 1141.0,960.0" fill="#9594ab" stroke="#000" stroke-width="1" stroke-linejoin="round" stroke-linecap="round"/>
<path d="M1144.800 956.1999999999999L1141 960.0L1131.400 963.8L1124.800 965.1999999999999" fill="none" stroke="#000" stroke-width="1" stroke-linejoin="round" stroke-linecap="round"/>
<path d="M1124.800 950.4L1141 960.0" fill="none" stroke="#000" stroke-width="1.8" stroke-linejoin="round" stroke-linecap="round"/>
<path d="M1271.900 769.300L1279.300 765M1271.900 825L1279.300 820.700M1271.900 880L1279.300 876M1124.800 875.200L1131.400 870.500M1124.800 932.400L1131.400 927.600M1124.800 985.700L1131.400 981" fill="none" stroke="#000" stroke-width=".7"/>
<g font-family="DejaVu Serif, Liberation Serif, serif" font-weight="bold" font-size="10"><path d="M521 731q-1 6 6 5.500" fill="none" stroke="#d8b840" stroke-width="1.600"/><g><path d="M525.3 733.5L538 723.5" stroke="#4c7c50" stroke-width="4"/><path d="M534 724.5l6-5.500 1 6.500z" fill="#4c7c50"/><path d="M525.3 733.5L545 737.5" stroke="#c4525c" stroke-width="3.600"/><path d="M551 739l-9 2 1-7.500z" fill="#c4525c"/><path d="M525.3 733.5V711.5" stroke="#5656b4" stroke-width="4.600"/><path d="M525.3 704.5l4 9h-8z" fill="#5656b4"/><text x="525.3" y="696.8" fill="#0000ff">Z</text><text x="544.5" y="720.2" fill="#008000">Y</text><text x="560.3" y="741.2" fill="#ff0000">X</text></g><g><path d="M40 1026L50.5 1018" stroke="#4c7c50" stroke-width="4"/><path d="M46.5 1019l6-5.500 1 6.500z" fill="#4c7c50"/><path d="M40 1026L59.5 1032.0" stroke="#c4525c" stroke-width="3.600"/><path d="M65.5 1033.5l-9 2 1-7.500z" fill="#c4525c"/><path d="M40 1026V1008" stroke="#5656b4" stroke-width="4.600"/><path d="M40 1001l4 9h-8z" fill="#5656b4"/><text x="39.5" y="992" fill="#0000ff">Z</text><text x="59.3" y="1015" fill="#008000">Y</text><text x="75.3" y="1036.2" fill="#ff0000">X</text></g><circle cx="39.300" cy="1028" r="4.200" fill="#858585"/><circle cx="38.300" cy="1027" r="2" fill="#9a9a9a"/></g>
</svg>
</div>
</body>
</html>
